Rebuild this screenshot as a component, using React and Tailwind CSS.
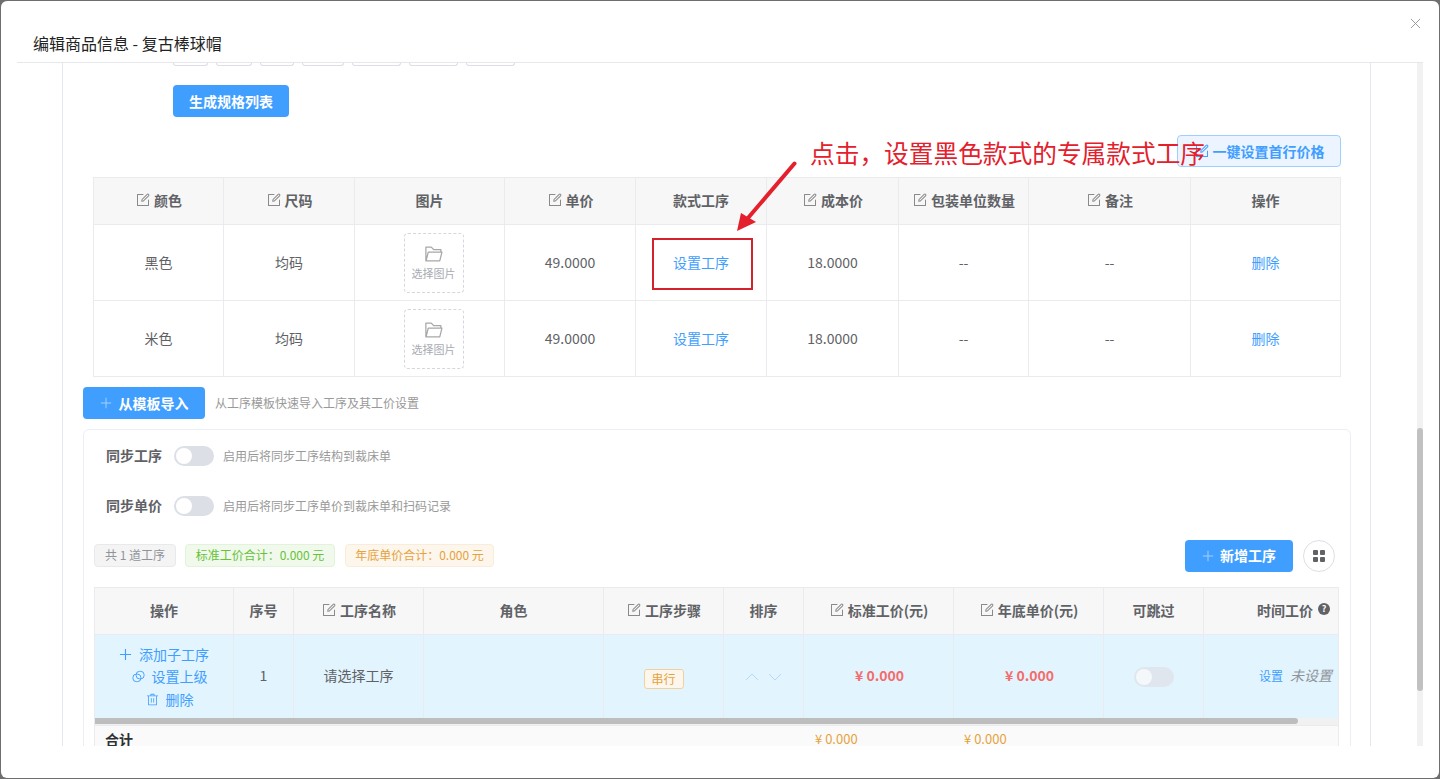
import React from 'react';

const FONT = '"Noto Sans CJK SC", "Noto Sans", sans-serif';

const EDIT_PATHS = [
  'M832 512a32 32 0 1 1 64 0v352a32 32 0 0 1-32 32H160a32 32 0 0 1-32-32V160a32 32 0 0 1 32-32h352a32 32 0 0 1 0 64H192v640h640z',
  'm469.952 554.24 52.8-7.552L847.104 222.4a32 32 0 1 0-45.248-45.248L477.44 501.44l-7.552 52.8zm422.4-422.4a96 96 0 0 1 0 135.808l-331.84 331.84a32 32 0 0 1-18.112 9.088L436.8 623.68a32 32 0 0 1-36.224-36.224l15.104-105.6a32 32 0 0 1 9.024-18.112l331.904-331.84a96 96 0 0 1 135.744 0z',
];

const EditIcon = ({ fill = '#8a8a8a' }) => (
  <svg viewBox="0 0 1024 1024" className="w-[16px] h-[16px] shrink-0 mr-[3px]" fill={fill}>
    {EDIT_PATHS.map(d => <path key={d} d={d} />)}
  </svg>
);

const FolderIcon = () => (
  <svg viewBox="0 0 1024 1024" className="w-[20px] h-[20px]" fill="#a8a8a8">
    <path d="M878.08 448H241.92l-96 384h636.16l96-384zM832 384v-64H485.76L357.504 192H128v448l57.92-231.744A32 32 0 0 1 216.96 384H832zm-24.96 512H96a32 32 0 0 1-32-32V160a32 32 0 0 1 32-32h287.872l128.384 128H864a32 32 0 0 1 32 32v96h23.04a32 32 0 0 1 31.04 39.744l-112 448A32 32 0 0 1 807.04 896z" />
  </svg>
);

const PlusIcon = ({ className }) => (
  <svg viewBox="0 0 14 14" className={className} fill="none" stroke="currentColor" strokeWidth="1.2">
    <path d="M7 1v12M1 7h12" />
  </svg>
);

const LinkIcon = () => (
  <svg viewBox="0 0 14 14" className="w-[13px] h-[13px] mr-[7px]" fill="none" stroke="#409eff" strokeWidth="1">
    <rect x="1" y="4.5" width="8.5" height="8" rx="3.5" />
    <rect x="4.5" y="1.5" width="8.5" height="8" rx="3.5" />
  </svg>
);

const TrashIcon = () => (
  <svg viewBox="0 0 1024 1024" className="w-[13px] h-[13px] mr-[7px]" fill="#409eff">
    <path d="M160 256H96a32 32 0 0 1 0-64h256V95.936a32 32 0 0 1 32-32h256a32 32 0 0 1 32 32V192h256a32 32 0 1 1 0 64h-64v672a32 32 0 0 1-32 32H192a32 32 0 0 1-32-32V256zm448-64v-64H416v64h192zM224 896h576V256H224v640zm192-128a32 32 0 0 1-32-32V416a32 32 0 0 1 64 0v320a32 32 0 0 1-32 32zm192 0a32 32 0 0 1-32-32V416a32 32 0 0 1 64 0v320a32 32 0 0 1-32 32z" />
  </svg>
);

const CLIPPED_TAGS = [35, 36, 34, 42, 49, 49, 49];

const SPEC_HEADERS = [
  { label: '颜色', edit: true },
  { label: '尺码', edit: true },
  { label: '图片' },
  { label: '单价', edit: true },
  { label: '款式工序' },
  { label: '成本价', edit: true },
  { label: '包装单位数量', edit: true },
  { label: '备注', edit: true },
  { label: '操作' },
];

const SPEC_ROWS = [{ color: '黑色' }, { color: '米色' }];

const STEP_HEADERS = [
  { label: '操作' },
  { label: '序号' },
  { label: '工序名称', edit: true },
  { label: '角色' },
  { label: '工序步骤', edit: true },
  { label: '排序' },
  { label: '标准工价(元)', edit: true },
  { label: '年底单价(元)', edit: true },
  { label: '可跳过' },
];

const Cell = ({ children, className = '' }) => (
  <div className={`flex items-center justify-center border-r border-[#e9ebef] last:border-r-0 ${className}`}>{children}</div>
);

const HeadCell = ({ label, edit }) => (
  <Cell className="h-[46px] pb-[2px] bg-[#f7f7f7] text-[14px] font-bold text-[#606266]">
    {edit && <EditIcon />}
    {label}
  </Cell>
);

const SpecTable = () => (
  <div className="ml-[30px] w-[1248px] border-t border-[#e9ebef] mt-[10px] border-l border-r">
    <div className="grid grid-cols-[130px_131px_150px_131px_131px_132px_130px_162px_149px] border-b border-[#e9ebef]">
      {SPEC_HEADERS.map(h => <HeadCell key={h.label} {...h} />)}
    </div>
    {SPEC_ROWS.map(row => (
      <div key={row.color} className="grid grid-cols-[130px_131px_150px_131px_131px_132px_130px_162px_149px] h-[76px] border-b border-[#e9ebef] text-[14px] text-[#606266]">
        <Cell>{row.color}</Cell>
        <Cell>均码</Cell>
        <Cell>
          <div className="ml-[8px] w-[60px] h-[60px] border border-dashed border-[#d4d7de] rounded-[4px] flex flex-col items-center justify-center">
            <FolderIcon />
            <span className="text-[11px] text-[#a8abb2] mt-[1px]">选择图片</span>
          </div>
        </Cell>
        <Cell>49.0000</Cell>
        <Cell className="text-[#409eff]">设置工序</Cell>
        <Cell>18.0000</Cell>
        <Cell>--</Cell>
        <Cell>--</Cell>
        <Cell className="text-[#409eff]">删除</Cell>
      </div>
    ))}
  </div>
);

const SyncRow = ({ label, hint, className = '' }) => (
  <div className={`flex items-center h-[20px] ${className}`}>
    <span className="w-[68px] pb-[2px] text-[14px] font-bold text-[#606266] whitespace-nowrap">{label}</span>
    <span className="w-[40px] h-[20px] rounded-full bg-[#dcdfe6] p-[2px] flex">
      <span className="w-[16px] h-[16px] rounded-full bg-white" />
    </span>
    <span className="ml-[9px] pb-[1px] text-[12px] text-[#999]">{hint}</span>
  </div>
);

const Tag = ({ children, className }) => (
  <span className={`h-[23px] pb-[1px] flex items-center justify-center rounded-[4px] border text-[12px] whitespace-nowrap ${className}`}>{children}</span>
);

const StepTable = () => (
  <div className="ml-[10px] mt-[15px] w-[1245px] overflow-hidden border border-[#e9ebef]">
    <div className="w-[1400px]">
      <div className="grid grid-cols-[139px_60px_130px_180px_120px_80px_150px_150px_100px_291px] border-b border-[#e9ebef]">
        {STEP_HEADERS.map(h => <HeadCell key={h.label} {...h} />)}
        <div className="h-[46px] bg-[#f7f7f7] text-[14px] font-bold text-[#606266] flex items-center pl-[53px] pb-[2px]">
          时间工价
          <span className="ml-[5px] mb-[3px] w-[12px] h-[12px] rounded-full bg-[#606266] text-white text-[9px] leading-none flex items-center justify-center">?</span>
        </div>
      </div>
      <div className="grid grid-cols-[139px_60px_130px_180px_120px_80px_150px_150px_100px_291px] h-[83px] bg-[#e2f4fe] text-[14px] text-[#606266]">
        <Cell className="flex-col text-[#409eff] leading-[22.5px]">
          <span className="flex items-center"><PlusIcon className="w-[13px] h-[13px] mr-[7px]" />添加子工序</span>
          <span className="flex items-center ml-[11px]"><LinkIcon />设置上级</span>
          <span className="flex items-center ml-[11px]"><TrashIcon />删除</span>
        </Cell>
        <Cell className="pb-[2px]">1</Cell>
        <Cell className="pb-[2px]">请选择工序</Cell>
        <Cell />
        <Cell>
          <span className="mt-[4px] w-[40px] h-[20px] flex items-center justify-center rounded-[3px] border border-[#f3d19e] bg-[#fdf6ec] text-[12px] text-[#e6a23c]">串行</span>
        </Cell>
        <Cell className="gap-[9px]">
          <svg viewBox="0 0 14 8" className="w-[14px] h-[8px]" fill="none" stroke="#b3d8ff" strokeWidth="1"><path d="M1 7l6-6 6 6" /></svg>
          <svg viewBox="0 0 14 8" className="w-[14px] h-[8px]" fill="none" stroke="#b3d8ff" strokeWidth="1"><path d="M1 1l6 6 6-6" /></svg>
        </Cell>
        <Cell className="pb-[2px] pl-[2px] font-bold text-[#f56c6c]">¥ 0.000</Cell>
        <Cell className="pb-[2px] pl-[2px] font-bold text-[#f56c6c]">¥ 0.000</Cell>
        <Cell>
          <span className="w-[40px] h-[20px] rounded-full bg-[#e0e6ed] p-[2px] flex">
            <span className="w-[16px] h-[16px] rounded-full bg-[#f4f8fb]" />
          </span>
        </Cell>
        <div className="flex items-center pl-[55px] pb-[2px] text-[12px]">
          <span className="text-[#409eff]">设置</span>
          <span className="ml-[7px] text-[14px] italic text-[#909399]">未设置</span>
        </div>
      </div>
    </div>
    <div className="h-[7px] bg-[#f1f1f1] flex">
      <div className="w-[1203px] h-[6px] bg-[#bdbdbd] rounded-r-full" />
    </div>
    <div className="w-[1400px] h-[40px] bg-[#fafafa] border-t border-[#e9ebef] grid grid-cols-[709px_150px_691px] text-[13px] leading-[26px]">
      <span className="pl-[10px] text-[14px] font-bold text-[#303133]">合计</span>
      <span className="pl-[11px] text-[#e6a23c]">¥ 0.000</span>
      <span className="pl-[10px] text-[#e6a23c]">¥ 0.000</span>
    </div>
  </div>
);

export default function App() {
  return (
    <div className="relative w-[1440px] h-[779px] overflow-hidden bg-[#6e6e6e] pl-[1px] pr-[1px] pt-[1px] pb-[1px]" style={{ fontFamily: FONT }}>
      <div className="h-full bg-white rounded-[6px] flex flex-col">
        {/* Header */}
        <div className="h-[62px] ml-[16px] mr-[16px] border-b border-[#e5e7eb] flex items-end pb-[8px] relative shrink-0">
          <span className="ml-[16px] text-[16px] leading-[22px] text-[#222]">编辑商品信息 - 复古棒球帽</span>
          <svg viewBox="0 0 12 12" className="absolute right-[2px] top-[17px] w-[11px] h-[11px]" fill="none" stroke="#909399" strokeWidth="1">
            <path d="M1 1l10 10M11 1L1 11" />
          </svg>
        </div>

        {/* Body */}
        <div className="h-[683px] ml-[16px] mr-[16px] flex overflow-hidden shrink-0">
          <div className="w-[1400px] flex pl-[45px] pr-[46px]">
            <div className="w-[1309px] border-l border-r border-[#e4e7ed]">
              <div className="ml-[110px] flex gap-[8px] h-[3px]">
                {CLIPPED_TAGS.map((w, i) => (
                  <div key={i} className="h-[3px] border border-t-0 border-[#dcdfe6] rounded-b-[4px]" style={{ width: w }} />
                ))}
              </div>
              <button className="ml-[110px] mt-[19px] w-[116px] h-[32px] block rounded-[4px] bg-[#409eff] text-white text-[14px] font-bold">生成规格列表</button>
              <div className="flex justify-end mr-[29px] mt-[18px]">
                <button className="w-[164px] h-[32px] rounded-[4px] border border-[#a0cfff] bg-[#ecf5ff] text-[#409eff] text-[14px] font-bold flex items-center justify-center">
                  <EditIcon fill="#409eff" />
                  一键设置首行价格
                </button>
              </div>
              <SpecTable />

              <div className="ml-[20px] mt-[10px] flex items-center">
                <button className="w-[122px] h-[32px] rounded-[4px] bg-[#409eff] text-white text-[14px] font-bold flex items-center justify-center">
                  <PlusIcon className="w-[12px] h-[12px] mr-[7px] text-[#a0cfff]" />
                  从模板导入
                </button>
                <span className="ml-[10px] text-[12px] text-[#999]">从工序模板快速导入工序及其工价设置</span>
              </div>

              <div className="ml-[20px] mt-[10px] w-[1268px] h-[340px] border border-[#ebeef5] rounded-t-[6px] pt-[16px]">
                <SyncRow label="同步工序" hint="启用后将同步工序结构到裁床单" className="ml-[22px]" />
                <SyncRow label="同步单价" hint="启用后将同步工序单价到裁床单和扫码记录" className="ml-[22px] mt-[30px]" />
                <div className="mt-[24px] ml-[10px] mr-[15px] flex items-center justify-between">
                  <div className="flex items-center mt-[-1px]">
                    <Tag className="w-[82px] bg-[#f4f4f5] border-[#e9e9eb] text-[#909399]">共 1 道工序</Tag>
                    <Tag className="ml-[9px] w-[150px] bg-[#f0f9eb] border-[#e1f3d8] text-[#67c23a]">标准工价合计：0.000 元</Tag>
                    <Tag className="ml-[10px] w-[149px] bg-[#fdf6ec] border-[#faecd8] text-[#e6a23c]">年底单价合计：0.000 元</Tag>
                  </div>
                  <div className="flex items-center gap-[10px]">
                    <button className="w-[108px] h-[32px] pb-[1px] rounded-[4px] bg-[#409eff] text-white text-[14px] font-bold flex items-center justify-center">
                      <PlusIcon className="w-[12px] h-[12px] mr-[6px] text-[#a0cfff]" />
                      新增工序
                    </button>
                    <button className="w-[32px] h-[32px] rounded-full border border-[#dcdfe6] bg-white grid grid-cols-[5px_5px] gap-[2px] content-center justify-center">
                      <span className="h-[5px] bg-[#606266] rounded-[1px]" />
                      <span className="h-[5px] bg-[#606266] rounded-[1px]" />
                      <span className="h-[5px] bg-[#606266] rounded-[1px]" />
                      <span className="h-[5px] bg-[#606266] rounded-[1px]" />
                    </button>
                  </div>
                </div>
                <StepTable />
              </div>
            </div>
          </div>
          {/* Page scrollbar */}
          <div className="w-[6px] bg-[#f1f1f1] pt-[365px] shrink-0">
            <div className="h-[263px] bg-[#c1c1c1] rounded-full" />
          </div>
        </div>
      </div>

      {/* Annotation laid over the page */}
      <span className="absolute left-[810px] top-[133px] text-[24.7px] leading-[38px] text-[#e3202c] whitespace-nowrap">点击，设置黑色款式的专属款式工序</span>
      <svg className="absolute left-[730px] top-[155px] w-[72px] h-[84px]" viewBox="0 0 72 84" fill="#e3202c">
        <path d="M64.5 8.5L18 63" stroke="#e3202c" strokeWidth="4" strokeLinecap="round" fill="none" />
        <path d="M7 76L11 58L26 67Z" />
      </svg>
      <div className="absolute left-[652px] top-[238px] w-[101px] h-[52px] border-2 border-[#d3222e]" />
    </div>
  );
}
